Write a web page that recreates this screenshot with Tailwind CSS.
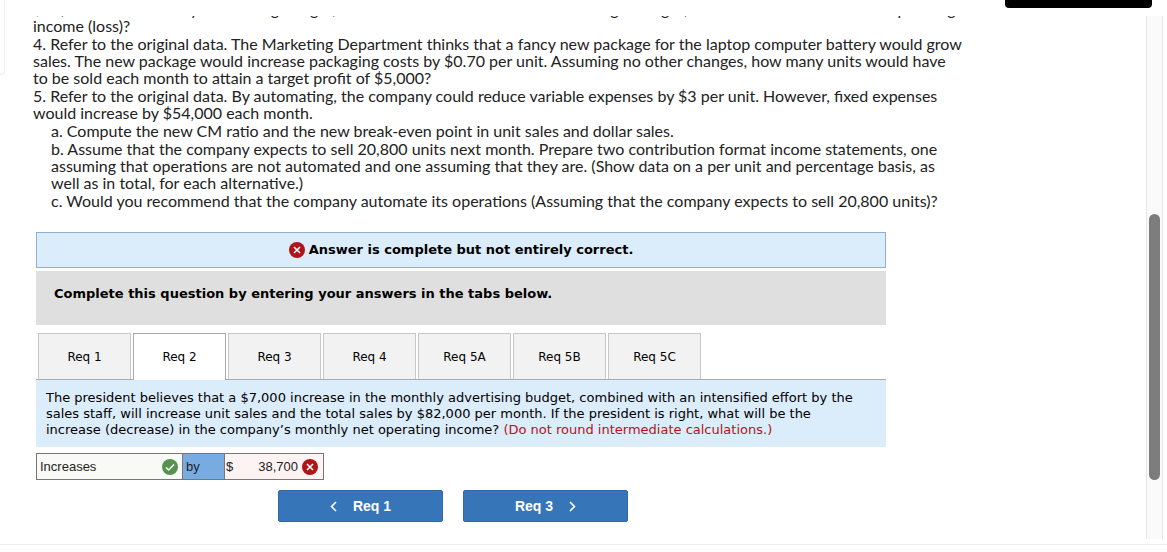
<!DOCTYPE html>
<html lang="en">
<head>
    <meta charset="UTF-8">
    <meta name="viewport" content="width=device-width, initial-scale=1.0">
    <title>Break-Even Analysis - Req 2</title>
    <script src="https://cdn.jsdelivr.net/npm/@tailwindcss/browser@4"></script>
</head>
<body class="flex min-h-screen bg-white text-black">
    <!-- Edge of the side panel -->
    <aside class="h-[75px] w-[5px] shrink-0 rounded-br border-r border-b border-[#ececec]"></aside>

    <div class="flex min-w-0 flex-1 flex-col">
        <header class="flex h-4 items-start justify-end pr-[15px]">
            <div class="h-[8px] w-[147px] rounded-b-sm bg-black"></div>
        </header>

        <div class="flex flex-1 pr-1">
            <main class="min-w-0 flex-1 overflow-hidden pl-7">
                <!-- Question text, scrolled part way down -->
                <div class="-mt-4 flex flex-col gap-px font-['Lato',sans-serif] text-[16px] leading-[17px] whitespace-nowrap text-[#222]">
                    <p>$38,000 in the monthly advertising budget, will double unit sales. If the sales manager is right, what will be the revised net operating<br>
                        income (loss)?</p>
                    <p>4. Refer to the original data. The Marketing Department thinks that a fancy new package for the laptop computer battery would grow<br>
                        sales. The new package would increase packaging costs by $0.70 per unit. Assuming no other changes, how many units would have<br>
                        to be sold each month to attain a target profit of $5,000?</p>
                    <p>5. Refer to the original data. By automating, the company could reduce variable expenses by $3 per unit. However, fixed expenses<br>
                        would increase by $54,000 each month.</p>
                    <p class="pl-[18px]">a. Compute the new CM ratio and the new break-even point in unit sales and dollar sales.</p>
                    <p class="pl-[18px]">b. Assume that the company expects to sell 20,800 units next month. Prepare two contribution format income statements, one<br>
                        assuming that operations are not automated and one assuming that they are. (Show data on a per unit and percentage basis, as<br>
                        well as in total, for each alternative.)</p>
                    <p class="pl-[18px]">c. Would you recommend that the company automate its operations (Assuming that the company expects to sell 20,800 units)?</p>
                </div>

                <div class="mt-[23px] ml-[3px] max-w-[850px] font-['DejaVu_Sans',sans-serif] text-[13px]">
                    <!-- Result banner -->
                    <div class="flex h-9 items-center justify-center gap-1 border border-[#8fb0d6] bg-[#dbecfa] font-bold">
                        <svg class="size-4" viewBox="0 0 16 16"><circle cx="8" cy="8" r="8" fill="#ad1519"/><path d="M5 5l6 6M11 5l-6 6" stroke="#fff" stroke-width="1.6"/></svg>
                        <span>Answer is complete but not entirely correct.</span>
                    </div>
                    <div class="mt-[3px] h-[54px] bg-[#dfdfdf] px-[18px] pt-[13px] leading-5 font-bold">Complete this question by entering your answers in the tabs below.</div>

                    <!-- Tabs -->
                    <nav class="mt-2 flex gap-[2px] border-b border-[#a3adb8] pl-[2px] text-[12px]">
                        <button class="h-[46px] w-[93px] border border-b-0 border-[#c8c8c8] bg-[#f2f2f2]">Req 1</button>
                        <button class="-mb-px h-[47px] w-[93px] border border-b-0 border-[#a8a8a8] bg-white">Req 2</button>
                        <button class="h-[46px] w-[93px] border border-b-0 border-[#c8c8c8] bg-[#f2f2f2]">Req 3</button>
                        <button class="h-[46px] w-[93px] border border-b-0 border-[#c8c8c8] bg-[#f2f2f2]">Req 4</button>
                        <button class="h-[46px] w-[93px] border border-b-0 border-[#c8c8c8] bg-[#f2f2f2]">Req 5A</button>
                        <button class="h-[46px] w-[93px] border border-b-0 border-[#c8c8c8] bg-[#f2f2f2]">Req 5B</button>
                        <button class="h-[46px] w-[93px] border border-b-0 border-[#c8c8c8] bg-[#f2f2f2]">Req 5C</button>
                    </nav>

                    <p class="bg-[#dbecfa] px-[10px] pt-[10px] pb-[9px] leading-[16px] whitespace-nowrap">The president believes that a $7,000 increase in the monthly advertising budget, combined with an intensified effort by the<br>
                        sales staff, will increase unit sales and the total sales by $82,000 per month. If the president is right, what will be the<br>
                        increase (decrease) in the company’s monthly net operating income? <span class="text-[#b5121b]">(Do not round intermediate calculations.)</span></p>

                    <!-- Answer row -->
                    <table class="mt-[6px] w-[288px] table-fixed border-collapse font-['Liberation_Sans',sans-serif] text-[13px] text-[#222]">
                        <tr class="h-[26px]">
                            <td class="w-[146px] border border-[#777] bg-[#f9faf5] p-0">
                                <div class="flex items-center pr-1 pl-[3px]">
                                    <select aria-label="Direction of change" class="min-w-0 flex-1 appearance-none">
                                        <option>Increases</option>
                                        <option>Decreases</option>
                                    </select>
                                    <svg class="size-4" viewBox="0 0 16 16"><circle cx="8" cy="8" r="8" fill="#57934f"/><path d="M4 8.5l2.7 2.5L12 5.5" fill="none" stroke="#fff" stroke-width="1.5"/></svg>
                                </div>
                            </td>
                            <td class="w-[42px] border border-[#777] bg-[#78abe2] py-0 pl-[3px]">by</td>
                            <td class="border border-[#777] bg-[#fdf3f3] p-0">
                                <div class="flex items-center gap-1 pr-[5px] pl-px">
                                    <span>$</span>
                                    <input aria-label="Amount" class="min-w-0 flex-1 text-right" value="38,700">
                                    <svg class="size-4" viewBox="0 0 16 16"><circle cx="8" cy="8" r="8" fill="#ad1519"/><path d="M5 5l6 6M11 5l-6 6" stroke="#fff" stroke-width="1.6"/></svg>
                                </div>
                            </td>
                        </tr>
                    </table>

                    <!-- Previous / next -->
                    <div class="mt-[10px] mb-[17px] ml-[242px] flex gap-5 font-['Liberation_Sans',sans-serif] text-[14px] font-bold text-white">
                        <button class="flex h-8 w-[165px] items-center justify-center gap-4 rounded-xs border border-[#3469a5] bg-[#3775b9]">
                            <svg class="h-[11px] w-[7px]" viewBox="0 0 7 11"><path d="M6 1L1.5 5.5 6 10" fill="none" stroke="#fff" stroke-width="1.6"/></svg>
                            Req 1
                        </button>
                        <button class="flex h-8 w-[165px] items-center justify-center gap-4 rounded-xs border border-[#3469a5] bg-[#3775b9]">
                            Req 3
                            <svg class="h-[11px] w-[7px]" viewBox="0 0 7 11"><path d="M1 1l4.5 4.5L1 10" fill="none" stroke="#fff" stroke-width="1.6"/></svg>
                        </button>
                    </div>
                </div>
            </main>

            <!-- Scrollbar -->
            <div class="w-[17px] shrink-0 border-x border-[#e6e6e6] bg-[#fafafa] px-[2px] pt-[198px]">
                <div class="h-[266px] rounded-full bg-[#7d7d7d]"></div>
            </div>
        </div>

        <footer class="mt-[5px] -ml-[5px] h-2 border-t border-[#efefef]"></footer>
    </div>
</body>
</html>
